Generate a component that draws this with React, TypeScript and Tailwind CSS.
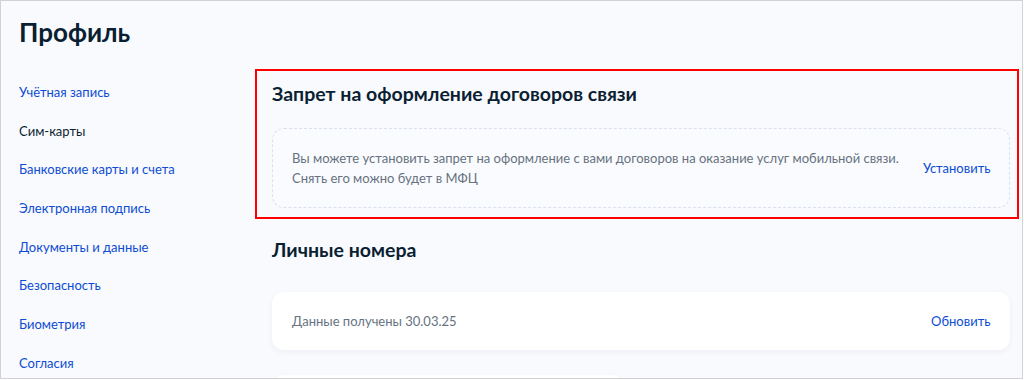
const navItems = [
  { label: 'Учётная запись', active: false },
  { label: 'Сим-карты', active: true },
  { label: 'Банковские карты и счета', active: false },
  { label: 'Электронная подпись', active: false },
  { label: 'Документы и данные', active: false },
  { label: 'Безопасность', active: false },
  { label: 'Биометрия', active: false },
  { label: 'Согласия', active: false },
];

export default function App() {
  return (
    <div className="w-[1024px] h-[380px] bg-white overflow-hidden">
      <div
        className="w-[1023px] h-[379px] border border-[#d2d2d2] bg-[#f9fafd] flex overflow-hidden text-[#0b1f33]"
        style={{ fontFamily: 'Lato, "Noto Sans", sans-serif' }}
      >
        {/* Sidebar */}
        <aside className="w-[254px] shrink-0 pl-[18px] pt-[13px]">
          <h1 className="text-[26px] leading-9 font-bold">Профиль</h1>
          <nav className="mt-[32px] flex flex-col gap-[18.7px]">
            {navItems.map((item) => (
              <a
                key={item.label}
                className={`text-[13px] leading-5 ${item.active ? 'text-[#0b1f33]' : 'text-[#0d4cd3]'}`}
              >
                {item.label}
              </a>
            ))}
          </nav>
        </aside>

        {/* Main */}
        <main className="flex-1 pt-[68px] pr-[6px]">
          {/* Highlighted section */}
          <section className="border-2 border-[#ff0000] pl-[15px] pr-[7px] pt-[9px] pb-[9px]">
            <h2 className="text-[19.5px] leading-7 font-bold">Запрет на оформление договоров связи</h2>
            <div className="mt-5 rounded-xl border border-dashed border-[#d9e1ee] bg-[#fafbfe] px-[19px] py-[19px] flex items-center justify-between gap-6">
              <p className="text-[13px] leading-5 text-[#66727f] whitespace-nowrap">
                Вы можете установить запрет на оформление с вами договоров на оказание услуг мобильной связи.
                <br />
                Снять его можно будет в МФЦ
              </p>
              <button className="text-[13px] leading-5 text-[#0d4cd3] shrink-0">Установить</button>
            </div>
          </section>

          {/* Personal numbers */}
          <div className="pl-[17px] pr-[9px]">
            <h2 className="mt-[17px] text-[19.5px] leading-7 font-bold">Личные номера</h2>
            <div className="mt-7 rounded-xl bg-white px-5 py-[19px] flex items-center justify-between shadow-[0_2px_6px_rgba(14,49,114,0.05)]">
              <span className="text-[13px] leading-5 text-[#66727f]">Данные получены 30.03.25</span>
              <button className="text-[13px] leading-5 text-[#0d4cd3]">Обновить</button>
            </div>
            <div className="mt-[25px] w-[352px] h-12 rounded-xl bg-white shadow-[0_2px_6px_rgba(14,49,114,0.05)]" />
          </div>
        </main>
      </div>
    </div>
  );
}
